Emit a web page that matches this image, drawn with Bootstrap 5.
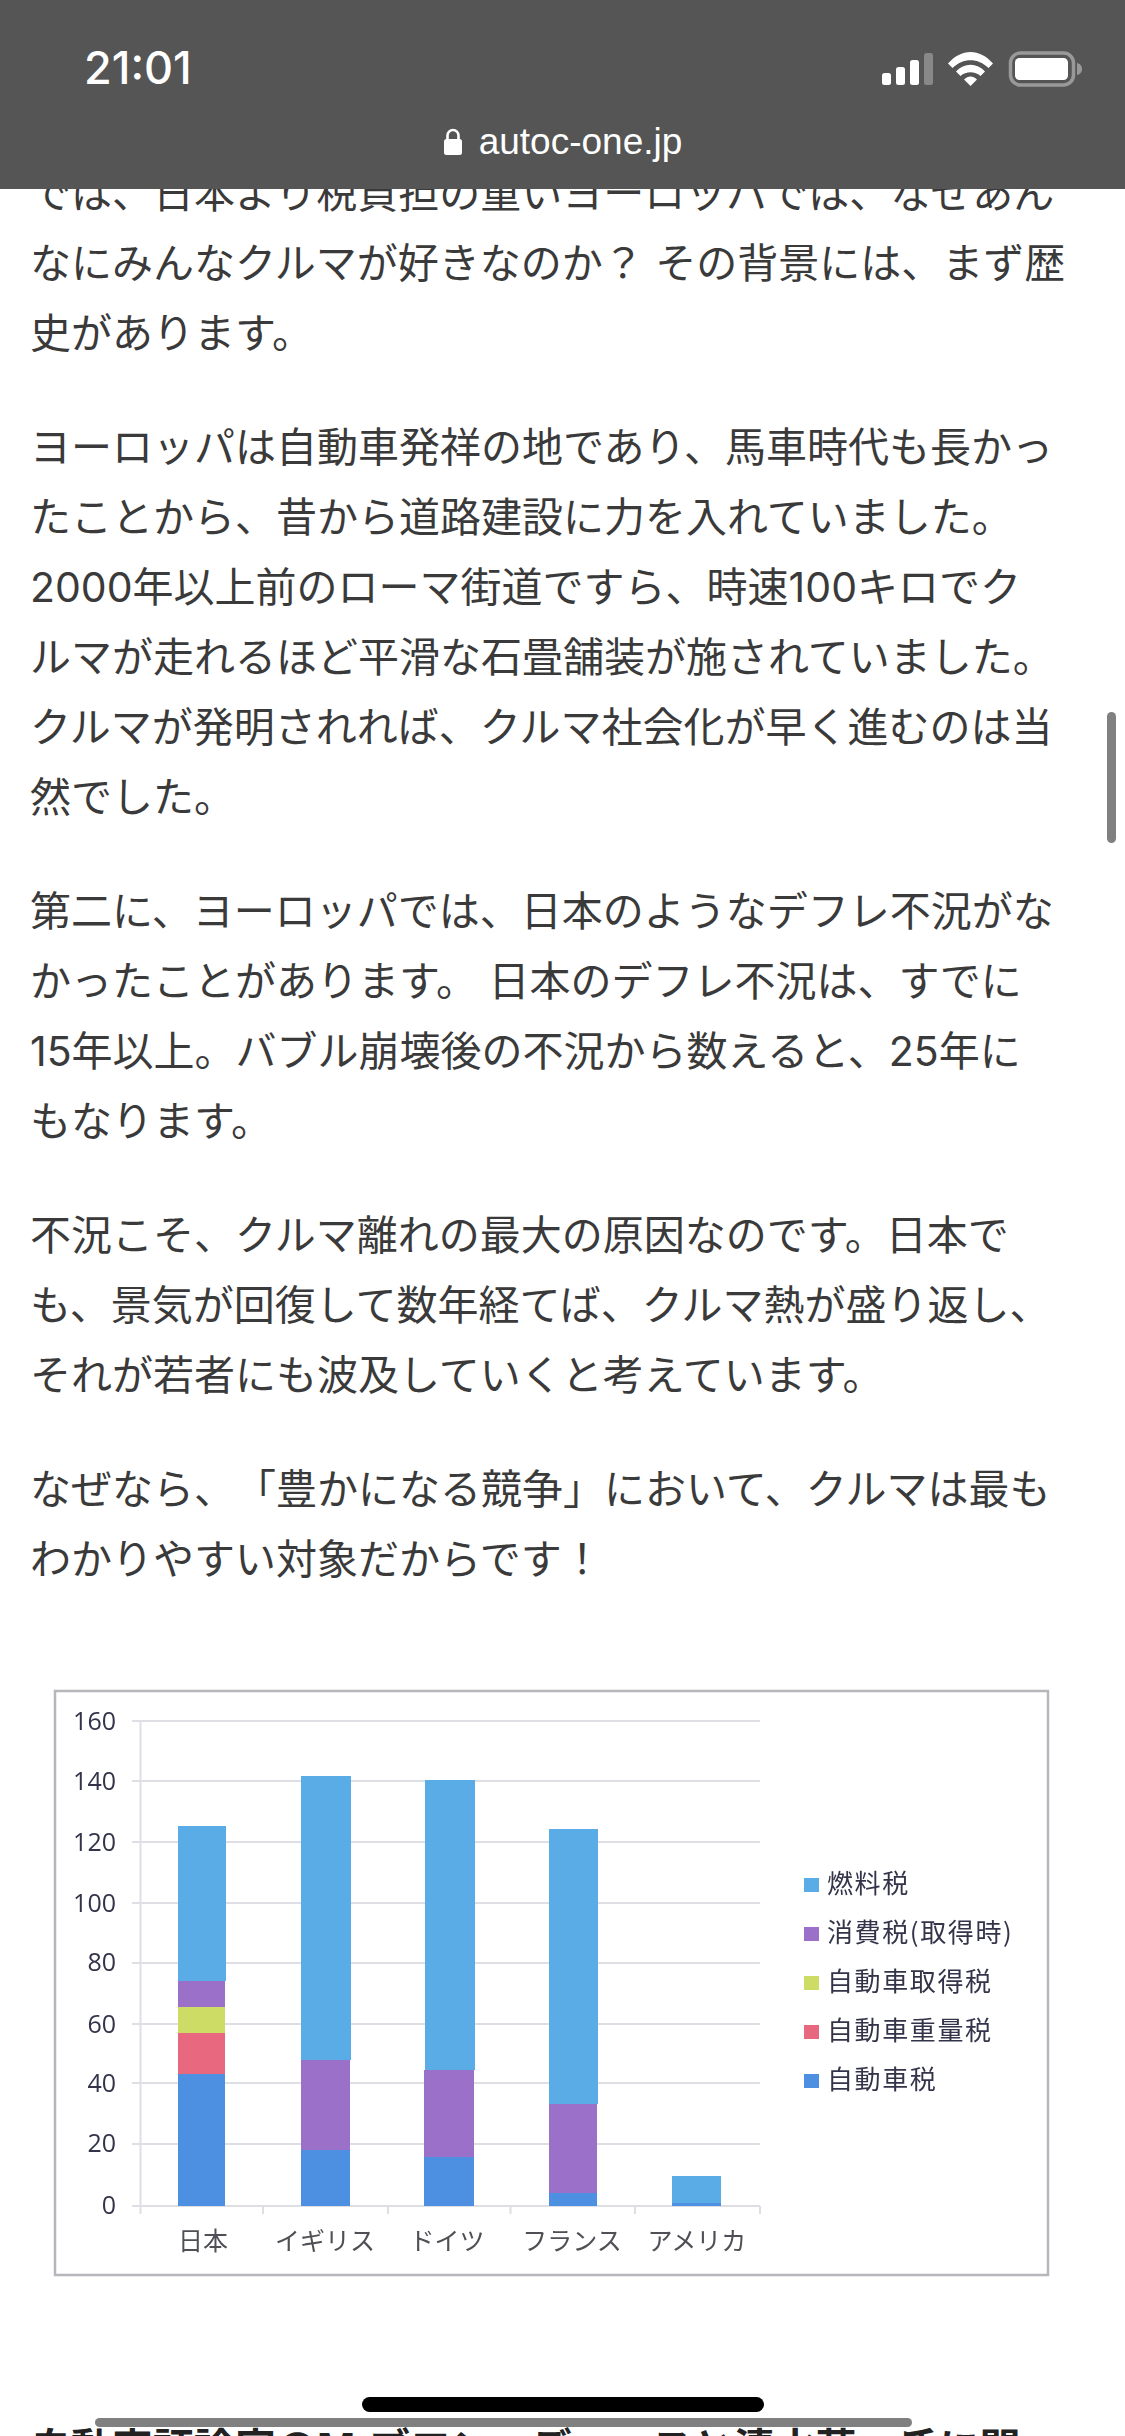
<!doctype html>
<html lang="ja">
<head>
<meta charset="utf-8">
<title>autoc-one.jp</title>
<link href="https://cdn.jsdelivr.net/npm/bootstrap@5.3.0/dist/css/bootstrap.min.css" rel="stylesheet">
<style>
html,body{margin:0;height:2436px;overflow:hidden;background:#fff}
.phone{width:1125px;height:2436px;overflow:hidden}
.browser-bar{height:189px;background:#555;z-index:5}
.clock{left:84px;top:40px;font:500 45px/56px Inter,"Liberation Sans",sans-serif;color:#fff}
.url-line{top:119px;height:46px;gap:16px;font:37px/46px "Liberation Sans",sans-serif;color:#fff}
.status-icons{left:880px;top:50px}
.article{padding:158px 30px 0;font:400 41px/70px Inter,"Noto Sans CJK JP",sans-serif;color:#3a3a3a;white-space:nowrap;text-spacing-trim:space-all}
.article p{margin:0 0 44px}
.article-chart{display:block;margin:0;filter:blur(.6px)}
.axis-num{font:500 25px "Open Sans",sans-serif;fill:#33334a}
.axis-cat{font:400 25px "Noto Sans CJK JP",sans-serif;fill:#4f4f55}
.legend-txt{font:400 26px "Noto Sans CJK JP",sans-serif;fill:#33334a;letter-spacing:1.600px}
.next-head{margin:0;font:700 41px/70px Inter,"Noto Sans CJK JP",sans-serif;color:#222}
.home-bar{left:362px;top:2397px;width:402px;height:15px;border-radius:8px;background:#000;z-index:6}
.h-scroll{left:95px;top:2418px;width:817px;height:9px;border-radius:5px;background:#808080;z-index:6}
.v-scroll{left:1107px;top:712px;width:9px;height:131px;border-radius:5px;background:#808080;z-index:6}
</style>
</head>
<body>
<div class="phone position-relative">
  <header class="browser-bar position-absolute top-0 start-0 w-100">
    <div class="clock position-absolute">21:01</div>
    <svg class="status-icons position-absolute" width="205" height="40" viewBox="880 50 205 40">
      <rect x="882" y="73" width="9" height="12" rx="2.5" fill="#fff"/>
      <rect x="896" y="67" width="9" height="18" rx="2.5" fill="#fff"/>
      <rect x="910" y="60" width="9" height="25" rx="2.5" fill="#fff"/>
      <rect x="924" y="53" width="9" height="32" rx="2.5" fill="#888"/>
      <path d="M948 63.500C961 48 980 48 993 63.500L988.500 68C978 57.500 963 57.500 952.500 68Z" fill="#fff"/>
      <path d="M956 71.500C964 62.500 977 62.500 985 71.500L980.500 76C975 71 966 71 960.500 76Z" fill="#fff"/>
      <path d="M964 79.500C968 75.500 973 75.500 977 79.500L970.500 86Z" fill="#fff"/>
      <rect x="1010.500" y="53" width="63" height="32" rx="10" fill="none" stroke="#999" stroke-width="3.500"/>
      <rect x="1015" y="58" width="53" height="22" rx="4.500" fill="#fff"/>
      <path d="M1077 63C1081 64 1082 66.500 1082 69C1082 71.500 1081 74 1077 75Z" fill="#999"/>
    </svg>
    <div class="url-line position-absolute start-0 w-100 d-flex justify-content-center align-items-center">
      <svg width="20" height="28" viewBox="0 0 20 28"><path d="M4.500 12V7.500a5.500 5.500 0 0 1 11 0V12" fill="none" stroke="#fff" stroke-width="2.600"/><rect x="1" y="11" width="18" height="16" rx="2.500" fill="#fff"/></svg>
      <span>autoc-one.jp</span>
    </div>
  </header>

  <main class="article">
    <p>では、日本より税負担の重いヨーロッパでは、なぜあん<br>なにみんなクルマが好きなのか？ その背景には、まず歴<br>史があります。</p>
    <p>ヨーロッパは自動車発祥の地であり、馬車時代も長かっ<br>たことから、昔から道路建設に力を入れていました。<br>2000年以上前のローマ街道ですら、時速100キロでク<br>ルマが走れるほど平滑な石畳舗装が施されていました。<br>クルマが発明されれば、クルマ社会化が早く進むのは当<br>然でした。</p>
    <p>第二に、ヨーロッパでは、日本のようなデフレ不況がな<br>かったことがあります。 日本のデフレ不況は、すでに<br>15年以上。バブル崩壊後の不況から数えると、25年に<br>もなります。</p>
    <p>不況こそ、クルマ離れの最大の原因なのです。日本で<br>も、景気が回復して数年経てば、クルマ熱が盛り返し、<br>それが若者にも波及していくと考えています。</p>
    <p>なぜなら、「豊かになる競争」において、クルマは最も<br>わかりやすい対象だからです！</p>
    <svg class="article-chart" width="1065" height="775" viewBox="30 1638 1065 775" role="img" aria-label="自動車関連税の国際比較">
      <rect x="55" y="1691" width="993" height="584" fill="#fff" stroke="#b6b7bd" stroke-width="2.500"/>
      <g stroke="#dedfe4" stroke-width="2">
        <path d="M132 1721H760M132 1781H760M132 1842H760M132 1903H760M132 1963H760M132 2024H760M132 2083H760M132 2144H760M132 2206H760"/>
        <path d="M140.500 1721V2214M263 2206V2214M388 2206V2214M510.500 2206V2214M635 2206V2214M760 2206V2214"/>
      </g>
      <g fill="#5aace6">
        <rect x="178" y="1826" width="48" height="155"/>
        <rect x="301" y="1776" width="50" height="284"/>
        <rect x="425" y="1780" width="50" height="290"/>
        <rect x="549" y="1829" width="49" height="275"/>
        <rect x="672" y="2176" width="49" height="27"/>
      </g>
      <g fill="#9a70c8">
        <rect x="178" y="1981" width="47" height="26"/>
        <rect x="301" y="2060" width="49" height="90"/>
        <rect x="424" y="2070" width="50" height="87"/>
        <rect x="549" y="2104" width="48" height="89"/>
      </g>
      <rect x="178" y="2007" width="47" height="26" fill="#cddc64"/>
      <rect x="178" y="2033" width="47" height="41" fill="#e8687f"/>
      <g fill="#4d8fe0">
        <rect x="178" y="2074" width="47" height="132"/>
        <rect x="301" y="2150" width="49" height="56"/>
        <rect x="424" y="2157" width="50" height="49"/>
        <rect x="549" y="2193" width="48" height="13"/>
        <rect x="672" y="2203" width="49" height="3"/>
      </g>
      <g class="axis-num" text-anchor="end">
        <text x="116" y="1730">160</text>
        <text x="116" y="1790">140</text>
        <text x="116" y="1851">120</text>
        <text x="116" y="1912">100</text>
        <text x="116" y="1971">80</text>
        <text x="116" y="2033">60</text>
        <text x="116" y="2092">40</text>
        <text x="116" y="2152">20</text>
        <text x="116" y="2214">0</text>
      </g>
      <g class="axis-cat" text-anchor="middle">
        <text x="203" y="2250">日本</text>
        <text x="325" y="2250">イギリス</text>
        <text x="447" y="2250">ドイツ</text>
        <text x="572" y="2250">フランス</text>
        <text x="697" y="2250">アメリカ</text>
      </g>
      <rect x="804" y="1878" width="15" height="14" fill="#5aace6"/>
      <rect x="804" y="1927" width="15" height="14" fill="#9a70c8"/>
      <rect x="804" y="1976" width="15" height="14" fill="#cddc64"/>
      <rect x="804" y="2025" width="15" height="14" fill="#e8687f"/>
      <rect x="804" y="2074" width="15" height="14" fill="#4d8fe0"/>
      <g class="legend-txt">
        <text x="827" y="1893">燃料税</text>
        <text x="827" y="1942">消費税(取得時)</text>
        <text x="827" y="1991">自動車取得税</text>
        <text x="827" y="2040">自動車重量税</text>
        <text x="827" y="2089">自動車税</text>
      </g>
    </svg>
    <h2 class="next-head">自動車評論家のM.ブロン、デュースと清水草一氏に聞</h2>
  </main>
  <div class="home-bar position-absolute"></div>
  <div class="h-scroll position-absolute"></div>
  <div class="v-scroll position-absolute"></div>
</div>
</body>
</html>
